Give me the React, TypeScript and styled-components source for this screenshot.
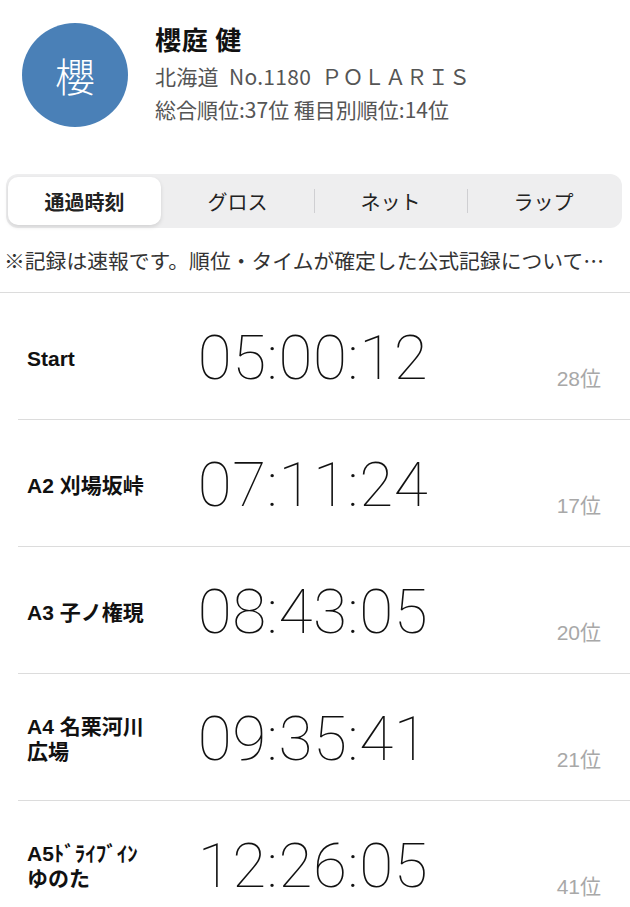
import React from 'react'
import styled, { createGlobalStyle } from 'styled-components'

const GlobalStyle = createGlobalStyle`
  body {
    margin: 0;
    background: #fff;
    font-family: "Liberation Sans", "Noto Sans CJK JP", sans-serif;
    color: #111;
  }
`

type Split = { label: string; time: string; rank: string }

const splits: Split[] = [
  { label: 'Start', time: '05:00:12', rank: '28位' },
  { label: 'A2 刈場坂峠', time: '07:11:24', rank: '17位' },
  { label: 'A3 子ノ権現', time: '08:43:05', rank: '20位' },
  { label: 'A4 名栗河川\n広場', time: '09:35:41', rank: '21位' },
  { label: 'A5ﾄﾞﾗｲﾌﾞｲﾝ\nゆのた', time: '12:26:05', rank: '41位' },
]

const tabs = ['通過時刻', 'グロス', 'ネット', 'ラップ']

export default function App() {
  const active = 0
  return (
    <Page>
      <GlobalStyle />
      <Header>
        <Avatar>櫻</Avatar>
        <Info>
          <Name>櫻庭 健</Name>
          <Meta>北海道&nbsp; No.1180&nbsp; ＰＯＬＡＲＩＳ</Meta>
          <Ranks>総合順位:37位 種目別順位:14位</Ranks>
        </Info>
      </Header>

      <Segmented>
        {tabs.map((t, i) => (
          <Segment key={t} $active={i === active} $divider={i > active + 1}>
            {t}
          </Segment>
        ))}
      </Segmented>

      <Note>※記録は速報です。順位・タイムが確定した公式記録について…</Note>

      <List>
        {splits.map((s) => (
          <Row key={s.label}>
            <Label>{s.label}</Label>
            <Time>{s.time}</Time>
            <Rank>{s.rank}</Rank>
          </Row>
        ))}
      </List>
    </Page>
  )
}

const Page = styled.div`
  width: 630px;
  height: 907px;
  overflow: hidden;
`

const Header = styled.div`
  display: flex;
  align-items: center;
  gap: 27px;
  padding: 23px 0 0 22px;
  height: 104px;
`

const Avatar = styled.div`
  width: 106px;
  height: 104px;
  flex-shrink: 0;
  border-radius: 50%;
  background: #4a80b7;
  color: #fff;
  display: flex;
  align-items: center;
  justify-content: center;
  font-family: "Noto Sans CJK JP", sans-serif;
  font-size: 40px;
  font-weight: 300;
`

const Info = styled.div`
  display: flex;
  flex-direction: column;
  margin-top: -2px;
`

const Name = styled.div`
  font-family: "Noto Sans CJK JP", sans-serif;
  font-size: 26px;
  font-weight: 700;
  color: #111;
  line-height: 30px;
  letter-spacing: 0.8px;
`

const Meta = styled.div`
  font-family: "Noto Sans CJK JP", sans-serif;
  font-size: 21px;
  color: #555;
  margin-top: 7px;
  line-height: 30px;
  white-space: nowrap;
  letter-spacing: 0.3px;
`

const Ranks = styled.div`
  font-family: "Noto Sans CJK JP", sans-serif;
  font-size: 21px;
  color: #555;
  margin-top: 3px;
  line-height: 30px;
  white-space: nowrap;
`

const Segmented = styled.div`
  display: flex;
  margin: 47px 8px 0 6px;
  height: 54px;
  padding: 3px 2px;
  box-sizing: border-box;
  background: #eeeeef;
  border-radius: 12px;
`

const Segment = styled.div<{ $active: boolean; $divider: boolean }>`
  flex: 1;
  display: flex;
  align-items: center;
  justify-content: center;
  position: relative;
  font-family: "Noto Sans CJK JP", sans-serif;
  font-size: 20px;
  font-weight: ${(p) => (p.$active ? 700 : 400)};
  color: #222;
  background: ${(p) => (p.$active ? '#fff' : 'transparent')};
  border-radius: 10px;
  box-shadow: ${(p) => (p.$active ? '0 2px 4px rgba(0,0,0,0.12)' : 'none')};
  &::before {
    content: '';
    display: ${(p) => (p.$divider ? 'block' : 'none')};
    position: absolute;
    left: 0;
    top: 12px;
    bottom: 12px;
    width: 1px;
    background: #cfcfd2;
  }
`

const Note = styled.div`
  margin-top: 18px;
  padding: 0 4px;
  font-family: "Noto Sans CJK JP", sans-serif;
  font-size: 20.8px;
  color: #333;
  line-height: 28px;
  white-space: nowrap;
`

const List = styled.div`
  margin-top: 18px;
  border-top: 1px solid #dcdcdc;
`

const Row = styled.div`
  display: grid;
  grid-template-columns: 143px 1fr 145px;
  margin-left: 18px;
  padding: 0 29px 0 9px;
  height: 126px;
  border-bottom: 1px solid #dcdcdc;
`

const Label = styled.div`
  align-self: center;
  font-size: 21px;
  font-weight: 700;
  line-height: 25px;
  white-space: pre-line;
  color: #111;
  margin-top: 4px;
`

const Time = styled.div`
  align-self: center;
  justify-self: center;
  font-family: Roboto, "Liberation Sans", sans-serif;
  font-weight: 100;
  font-size: 62px;
  letter-spacing: 0.6px;
  color: #111;
  white-space: nowrap;
  margin-top: 2px;
`

const Rank = styled.div`
  align-self: end;
  justify-self: end;
  padding-bottom: 27px;
  font-size: 21px;
  color: #a8a8a8;
  line-height: 26px;
`
